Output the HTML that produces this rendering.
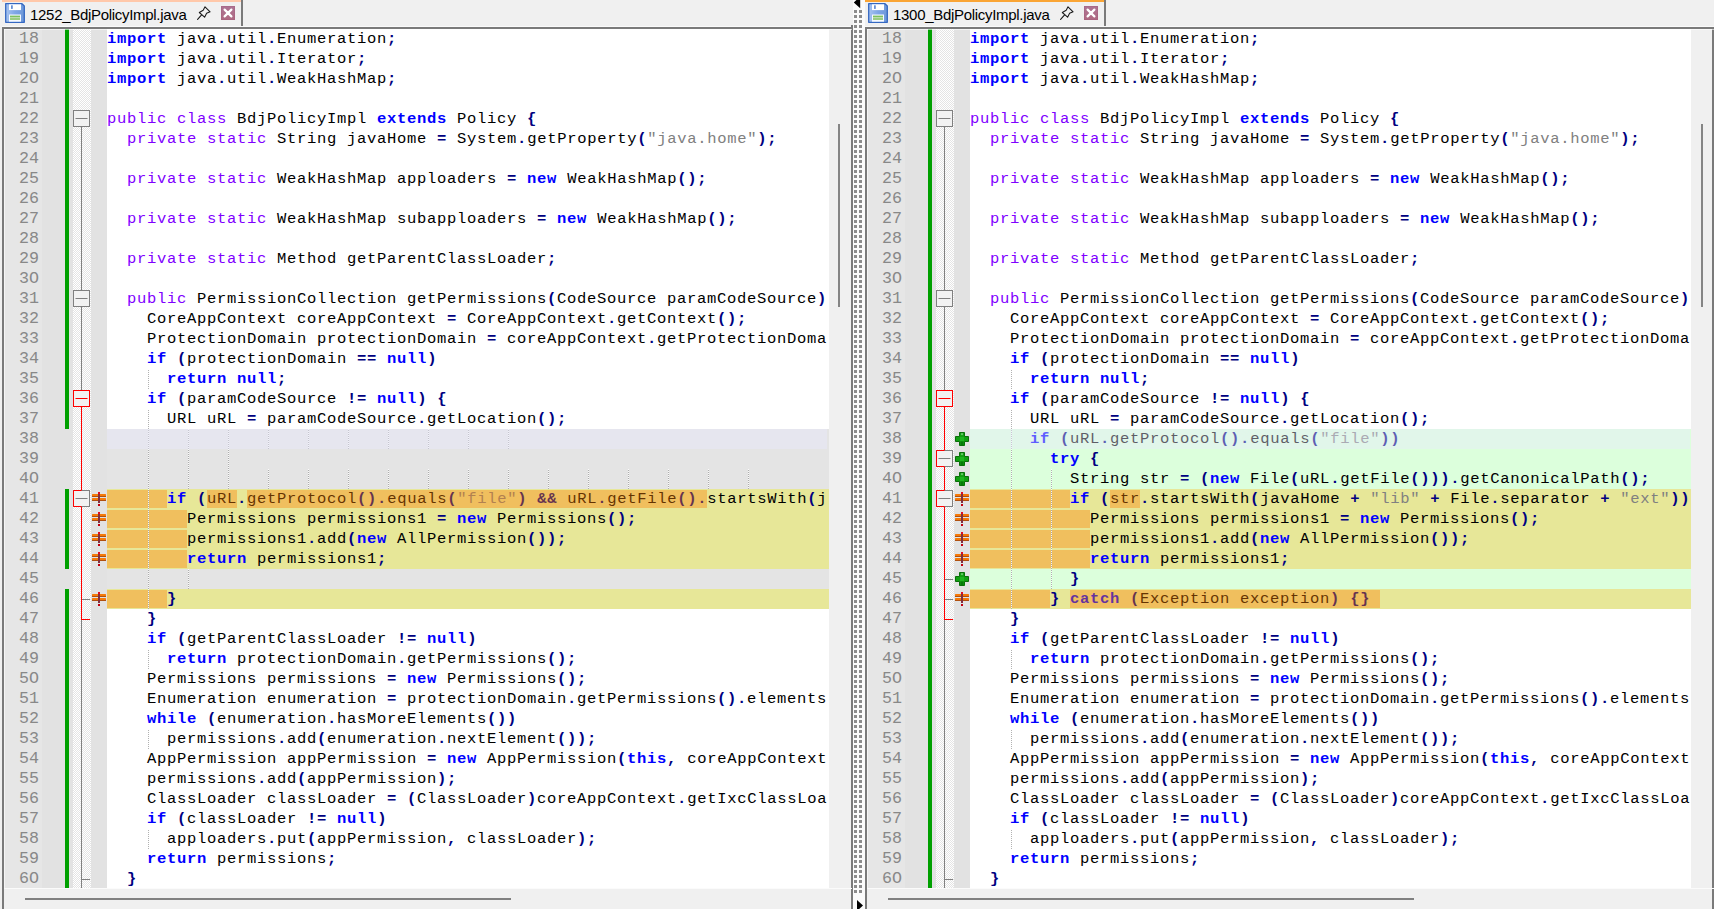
<!DOCTYPE html><html><head><meta charset="utf-8"><style>
*{margin:0;padding:0}
body{width:1714px;height:909px;overflow:hidden;background:#f0f0f0;position:relative;font-family:"Liberation Sans",sans-serif}
div,svg{position:absolute}
.tab{top:0;width:241px;height:26px;background:#f0f0f0}
.stripe{left:0;top:0;width:241px;height:2px}
.tabr{left:239px;top:0;width:2px;height:26px;background:#7a7a7a}
.tabtxt{top:5.5px;font-size:15px;letter-spacing:-0.3px;color:#000;white-space:pre;line-height:18px}
.fold{top:29px;width:18px;height:859px;background-color:#fff;background-image:linear-gradient(45deg,#e4e4e4 25%,transparent 25%,transparent 75%,#e4e4e4 75%),linear-gradient(45deg,#e4e4e4 25%,transparent 25%,transparent 75%,#e4e4e4 75%);background-size:2px 2px;background-position:0 0,1px 1px}
.ln{width:35px;height:20px;text-align:right;font-family:"Liberation Mono",monospace;font-size:16.67px;line-height:20px;color:#888888;white-space:pre}
.code{top:29px;width:722px;height:859px;overflow:hidden}
.l{left:0;height:20px;width:2000px;font-family:"Liberation Mono",monospace;font-size:15.5px;letter-spacing:0.6988px;line-height:20px;white-space:pre;color:#000}
.l b,.l i{font-style:normal}
.k{color:#0000ff;font-weight:bold}
.t{color:#8000ff;font-weight:normal}
.o{color:#000080;font-weight:bold}
.s{color:#808080}
.hi{height:18px;background:rgba(255,131,6,0.392)}
.ig{width:1px;height:20px;background:repeating-linear-gradient(#ffffff 0 1px,#a4a4a4 1px 2px);opacity:.85}
.caret{left:0;width:722px;height:20px;background:rgba(232,232,255,0.4)}
</style></head><body>
<div class="tab" style="left:2px"><div class="stripe" style="background:#ffc8aa"></div><div class="tabr"></div><svg style="position:absolute;left:3px;top:3px" width="20" height="20" viewBox="0 0 20 20"><defs><linearGradient id="fg" x1="0" y1="0" x2="1" y2="0"><stop offset="0" stop-color="#a8c4f0"/><stop offset="0.5" stop-color="#7ea6e6"/><stop offset="1" stop-color="#6e98d8"/></linearGradient></defs><path d="M0.7 0.7H17L19.3 3V19.3H0.7Z" fill="url(#fg)" stroke="#3568c2" stroke-width="1.3" stroke-linejoin="round"/><rect x="4" y="1.3" width="12" height="5.8" fill="#fff"/><rect x="6" y="2.3" width="1.8" height="3.6" fill="#6890d4"/><rect x="4" y="11.5" width="12" height="7.2" fill="#f6faff"/><rect x="5" y="12.6" width="10" height="1.4" fill="#7cc060"/><rect x="5" y="14" width="10" height="1" fill="#bcdcae"/><rect x="5" y="15" width="10" height="2" fill="#9ccd84"/></svg><div class="tabtxt" style="left:28px">1252_BdjPolicyImpl.java</div><svg style="position:absolute;left:195px;top:6px" width="14" height="14" viewBox="0 0 14 14"><path d="M8 0.8L13.1 5.8L9.6 7.3L7.6 11.2L2.3 6.5L6.2 4.2Z" fill="none" stroke="#1a1a1a" stroke-width="1.05" stroke-linejoin="round"/><path d="M4.4 9.2L0.6 13.4" stroke="#1a1a1a" stroke-width="1.1" stroke-linecap="round"/></svg><svg style="position:absolute;left:219px;top:6px" width="14" height="14" viewBox="0 0 14 14"><defs><linearGradient id="cg" x1="0" y1="0" x2="0" y2="1"><stop offset="0" stop-color="#ad7494"/><stop offset="1" stop-color="#b06a82"/></linearGradient></defs><rect x="0" y="0" width="14" height="14" fill="url(#cg)"/><rect x="0.5" y="0.5" width="13" height="13" fill="none" stroke="#a05a7c" stroke-width="1" opacity="0.35"/><path d="M3.6 3.6L10.4 10.4M10.4 3.6L3.6 10.4" stroke="#fff" stroke-width="2.2" stroke-linecap="round"/></svg></div>
<div style="position:absolute;left:2px;top:27px;width:850px;height:2px;background:#7a7a7a"></div>
<div style="position:absolute;left:2px;top:26px;width:850px;height:1px;background:#fafafa"></div>
<div style="position:absolute;left:2px;top:27px;width:2px;height:882px;background:#7a7a7a"></div>
<div style="position:absolute;left:4px;top:29px;width:848px;height:1px;background:rgba(255,255,255,0.6);z-index:5"></div>
<div style="position:absolute;left:4px;top:29px;width:1px;height:859px;background:rgba(255,255,255,0.6);z-index:5"></div>
<div style="position:absolute;left:4px;top:29px;width:38px;height:859px;background:#e6e6e6"></div>
<div style="position:absolute;left:42px;top:29px;width:65px;height:859px;background:#e2e2e2"></div>
<div class="fold" style="left:73px"></div>
<div style="position:absolute;left:107px;top:29px;width:722px;height:859px;background:#fff"></div>
<div style="position:absolute;left:829px;top:29px;width:22px;height:859px;background:#f0f0f0"></div>
<div style="position:absolute;left:838px;top:124px;width:2px;height:183px;background:#858585"></div>
<div style="position:absolute;left:4px;top:888px;width:848px;height:21px;background:#f0f0f0"></div>
<div style="position:absolute;left:4px;top:888px;width:848px;height:1px;background:#fbfbfb;z-index:6"></div>
<div style="position:absolute;left:25px;top:898px;width:486px;height:2px;background:#808080"></div>
<div style="position:absolute;left:851px;top:25px;width:2px;height:884px;background:#7a7a7a"></div>
<div class="ln" style="left:4px;top:29px">18</div>
<div class="ln" style="left:4px;top:49px">19</div>
<div class="ln" style="left:4px;top:69px">2O</div>
<div class="ln" style="left:4px;top:89px">21</div>
<div class="ln" style="left:4px;top:109px">22</div>
<div class="ln" style="left:4px;top:129px">23</div>
<div class="ln" style="left:4px;top:149px">24</div>
<div class="ln" style="left:4px;top:169px">25</div>
<div class="ln" style="left:4px;top:189px">26</div>
<div class="ln" style="left:4px;top:209px">27</div>
<div class="ln" style="left:4px;top:229px">28</div>
<div class="ln" style="left:4px;top:249px">29</div>
<div class="ln" style="left:4px;top:269px">3O</div>
<div class="ln" style="left:4px;top:289px">31</div>
<div class="ln" style="left:4px;top:309px">32</div>
<div class="ln" style="left:4px;top:329px">33</div>
<div class="ln" style="left:4px;top:349px">34</div>
<div class="ln" style="left:4px;top:369px">35</div>
<div class="ln" style="left:4px;top:389px">36</div>
<div class="ln" style="left:4px;top:409px">37</div>
<div class="ln" style="left:4px;top:429px">38</div>
<div class="ln" style="left:4px;top:449px">39</div>
<div class="ln" style="left:4px;top:469px">4O</div>
<div class="ln" style="left:4px;top:489px">41</div>
<div class="ln" style="left:4px;top:509px">42</div>
<div class="ln" style="left:4px;top:529px">43</div>
<div class="ln" style="left:4px;top:549px">44</div>
<div class="ln" style="left:4px;top:569px">45</div>
<div class="ln" style="left:4px;top:589px">46</div>
<div class="ln" style="left:4px;top:609px">47</div>
<div class="ln" style="left:4px;top:629px">48</div>
<div class="ln" style="left:4px;top:649px">49</div>
<div class="ln" style="left:4px;top:669px">5O</div>
<div class="ln" style="left:4px;top:689px">51</div>
<div class="ln" style="left:4px;top:709px">52</div>
<div class="ln" style="left:4px;top:729px">53</div>
<div class="ln" style="left:4px;top:749px">54</div>
<div class="ln" style="left:4px;top:769px">55</div>
<div class="ln" style="left:4px;top:789px">56</div>
<div class="ln" style="left:4px;top:809px">57</div>
<div class="ln" style="left:4px;top:829px">58</div>
<div class="ln" style="left:4px;top:849px">59</div>
<div class="ln" style="left:4px;top:869px">6O</div>
<div style="position:absolute;left:107px;top:429px;width:722px;height:20px;background:#e4e4e4"></div>
<div style="position:absolute;left:107px;top:449px;width:722px;height:20px;background:#e4e4e4"></div>
<div style="position:absolute;left:107px;top:469px;width:722px;height:20px;background:#e4e4e4"></div>
<div style="position:absolute;left:107px;top:569px;width:722px;height:20px;background:#e4e4e4"></div>
<div style="position:absolute;left:107px;top:489px;width:722px;height:20px;background:#e7e798"></div>
<div style="position:absolute;left:107px;top:509px;width:722px;height:20px;background:#e7e798"></div>
<div style="position:absolute;left:107px;top:529px;width:722px;height:20px;background:#e7e798"></div>
<div style="position:absolute;left:107px;top:549px;width:722px;height:20px;background:#e7e798"></div>
<div style="position:absolute;left:107px;top:589px;width:722px;height:20px;background:#e7e798"></div>
<div style="position:absolute;left:65px;top:29px;width:4px;height:400px;background:#00a000"></div>
<div style="position:absolute;left:65px;top:489px;width:4px;height:80px;background:#00a000"></div>
<div style="position:absolute;left:65px;top:589px;width:4px;height:299px;background:#00a000"></div>
<div style="position:absolute;left:81px;top:127px;width:1px;height:263px;background:#808080"></div>
<div style="position:absolute;left:81px;top:619px;width:1px;height:269px;background:#808080"></div>
<div style="position:absolute;left:81px;top:407px;width:1px;height:213px;background:#ff0000"></div>
<svg style="position:absolute;left:73px;top:110px" width="17" height="17" viewBox="0 0 17 17"><rect x="0.5" y="0.5" width="16" height="16" fill="#f2f2f2" stroke="#808080"/><path d="M2.5 8.5H14.5" stroke="#808080"/></svg>
<svg style="position:absolute;left:73px;top:290px" width="17" height="17" viewBox="0 0 17 17"><rect x="0.5" y="0.5" width="16" height="16" fill="#f2f2f2" stroke="#808080"/><path d="M2.5 8.5H14.5" stroke="#808080"/></svg>
<svg style="position:absolute;left:73px;top:390px" width="17" height="17" viewBox="0 0 17 17"><rect x="0.5" y="0.5" width="16" height="16" fill="#f2f2f2" stroke="#ff0000"/><path d="M2.5 8.5H14.5" stroke="#ff0000"/></svg>
<svg style="position:absolute;left:73px;top:490px" width="17" height="17" viewBox="0 0 17 17"><rect x="0.5" y="0.5" width="16" height="16" fill="#f2f2f2" stroke="#808080"/><path d="M8.5 0.5H0.5V16.5H8.5" fill="none" stroke="#ff0000"/><path d="M2.5 8.5H14.5" stroke="#808080"/></svg>
<div style="position:absolute;left:82px;top:599px;width:8px;height:1px;background:#808080"></div>
<div style="position:absolute;left:82px;top:619px;width:8px;height:1px;background:#ff0000"></div>
<div style="position:absolute;left:82px;top:879px;width:8px;height:1px;background:#808080"></div>
<svg style="position:absolute;left:92px;top:489px" width="15" height="20" viewBox="0 0 15 20"><rect x="0" y="5" width="14" height="3" rx="0.5" fill="#f57a0a"/><rect x="0" y="9" width="14" height="3" rx="0.5" fill="#f57a0a"/><rect x="0" y="7" width="14" height="1" fill="#b05010"/><rect x="0" y="11" width="14" height="1" fill="#b05010"/><rect x="6" y="3" width="2" height="11" fill="#803040"/><rect x="6" y="3" width="2" height="2" fill="#e01020"/><rect x="6" y="15" width="2" height="2" fill="#c00010"/></svg>
<svg style="position:absolute;left:92px;top:509px" width="15" height="20" viewBox="0 0 15 20"><rect x="0" y="5" width="14" height="3" rx="0.5" fill="#f57a0a"/><rect x="0" y="9" width="14" height="3" rx="0.5" fill="#f57a0a"/><rect x="0" y="7" width="14" height="1" fill="#b05010"/><rect x="0" y="11" width="14" height="1" fill="#b05010"/><rect x="6" y="3" width="2" height="11" fill="#803040"/><rect x="6" y="3" width="2" height="2" fill="#e01020"/><rect x="6" y="15" width="2" height="2" fill="#c00010"/></svg>
<svg style="position:absolute;left:92px;top:529px" width="15" height="20" viewBox="0 0 15 20"><rect x="0" y="5" width="14" height="3" rx="0.5" fill="#f57a0a"/><rect x="0" y="9" width="14" height="3" rx="0.5" fill="#f57a0a"/><rect x="0" y="7" width="14" height="1" fill="#b05010"/><rect x="0" y="11" width="14" height="1" fill="#b05010"/><rect x="6" y="3" width="2" height="11" fill="#803040"/><rect x="6" y="3" width="2" height="2" fill="#e01020"/><rect x="6" y="15" width="2" height="2" fill="#c00010"/></svg>
<svg style="position:absolute;left:92px;top:549px" width="15" height="20" viewBox="0 0 15 20"><rect x="0" y="5" width="14" height="3" rx="0.5" fill="#f57a0a"/><rect x="0" y="9" width="14" height="3" rx="0.5" fill="#f57a0a"/><rect x="0" y="7" width="14" height="1" fill="#b05010"/><rect x="0" y="11" width="14" height="1" fill="#b05010"/><rect x="6" y="3" width="2" height="11" fill="#803040"/><rect x="6" y="3" width="2" height="2" fill="#e01020"/><rect x="6" y="15" width="2" height="2" fill="#c00010"/></svg>
<svg style="position:absolute;left:92px;top:589px" width="15" height="20" viewBox="0 0 15 20"><rect x="0" y="5" width="14" height="3" rx="0.5" fill="#f57a0a"/><rect x="0" y="9" width="14" height="3" rx="0.5" fill="#f57a0a"/><rect x="0" y="7" width="14" height="1" fill="#b05010"/><rect x="0" y="11" width="14" height="1" fill="#b05010"/><rect x="6" y="3" width="2" height="11" fill="#803040"/><rect x="6" y="3" width="2" height="2" fill="#e01020"/><rect x="6" y="15" width="2" height="2" fill="#c00010"/></svg>
<div class="code" style="left:107px;width:720px">
<div class="l" style="top:0px"><b class="k">import</b> java<b class="o">.</b>util<b class="o">.</b>Enumeration<b class="o">;</b></div>
<div class="l" style="top:20px"><b class="k">import</b> java<b class="o">.</b>util<b class="o">.</b>Iterator<b class="o">;</b></div>
<div class="l" style="top:40px"><b class="k">import</b> java<b class="o">.</b>util<b class="o">.</b>WeakHashMap<b class="o">;</b></div>
<div class="l" style="top:60px"></div>
<div class="l" style="top:80px"><i class="t">public</i> <i class="t">class</i> BdjPolicyImpl <b class="k">extends</b> Policy <b class="o">{</b></div>
<div class="l" style="top:100px">  <i class="t">private</i> <i class="t">static</i> String javaHome <b class="o">=</b> System<b class="o">.</b>getProperty<b class="o">(</b><i class="s">&quot;java.home&quot;</i><b class="o">);</b></div>
<div class="l" style="top:120px"></div>
<div class="l" style="top:140px">  <i class="t">private</i> <i class="t">static</i> WeakHashMap apploaders <b class="o">=</b> <b class="k">new</b> WeakHashMap<b class="o">();</b></div>
<div class="l" style="top:160px"></div>
<div class="l" style="top:180px">  <i class="t">private</i> <i class="t">static</i> WeakHashMap subapploaders <b class="o">=</b> <b class="k">new</b> WeakHashMap<b class="o">();</b></div>
<div class="l" style="top:200px"></div>
<div class="l" style="top:220px">  <i class="t">private</i> <i class="t">static</i> Method getParentClassLoader<b class="o">;</b></div>
<div class="l" style="top:240px"></div>
<div class="l" style="top:260px">  <i class="t">public</i> PermissionCollection getPermissions<b class="o">(</b>CodeSource paramCodeSource<b class="o">)</b> <b class="o">{</b></div>
<div class="l" style="top:280px">    CoreAppContext coreAppContext <b class="o">=</b> CoreAppContext<b class="o">.</b>getContext<b class="o">();</b></div>
<div class="l" style="top:300px">    ProtectionDomain protectionDomain <b class="o">=</b> coreAppContext<b class="o">.</b>getProtectionDomain<b class="o">();</b></div>
<div class="l" style="top:320px">    <b class="k">if</b> <b class="o">(</b>protectionDomain <b class="o">==</b> <b class="k">null</b><b class="o">)</b></div>
<div class="l" style="top:340px">      <b class="k">return</b> <b class="k">null</b><b class="o">;</b></div>
<div class="l" style="top:360px">    <b class="k">if</b> <b class="o">(</b>paramCodeSource <b class="o">!=</b> <b class="k">null</b><b class="o">)</b> <b class="o">{</b></div>
<div class="l" style="top:380px">      URL uRL <b class="o">=</b> paramCodeSource<b class="o">.</b>getLocation<b class="o">();</b></div>
<div class="l" style="top:400px"></div>
<div class="l" style="top:420px"></div>
<div class="l" style="top:440px"></div>
<div class="l" style="top:460px">      <b class="k">if</b> <b class="o">(</b>uRL<b class="o">.</b>getProtocol<b class="o">().</b>equals<b class="o">(</b><i class="s">&quot;file&quot;</i><b class="o">)</b> <b class="o">&amp;&amp;</b> uRL<b class="o">.</b>getFile<b class="o">().</b>startsWith<b class="o">(</b>javaHome<b class="o">))</b> <b class="o">{</b></div>
<div class="l" style="top:480px">        Permissions permissions1 <b class="o">=</b> <b class="k">new</b> Permissions<b class="o">();</b></div>
<div class="l" style="top:500px">        permissions1<b class="o">.</b>add<b class="o">(</b><b class="k">new</b> AllPermission<b class="o">());</b></div>
<div class="l" style="top:520px">        <b class="k">return</b> permissions1<b class="o">;</b></div>
<div class="l" style="top:540px"></div>
<div class="l" style="top:560px">      <b class="o">}</b></div>
<div class="l" style="top:580px">    <b class="o">}</b></div>
<div class="l" style="top:600px">    <b class="k">if</b> <b class="o">(</b>getParentClassLoader <b class="o">!=</b> <b class="k">null</b><b class="o">)</b></div>
<div class="l" style="top:620px">      <b class="k">return</b> protectionDomain<b class="o">.</b>getPermissions<b class="o">();</b></div>
<div class="l" style="top:640px">    Permissions permissions <b class="o">=</b> <b class="k">new</b> Permissions<b class="o">();</b></div>
<div class="l" style="top:660px">    Enumeration enumeration <b class="o">=</b> protectionDomain<b class="o">.</b>getPermissions<b class="o">().</b>elements<b class="o">();</b></div>
<div class="l" style="top:680px">    <b class="k">while</b> <b class="o">(</b>enumeration<b class="o">.</b>hasMoreElements<b class="o">())</b></div>
<div class="l" style="top:700px">      permissions<b class="o">.</b>add<b class="o">(</b>enumeration<b class="o">.</b>nextElement<b class="o">());</b></div>
<div class="l" style="top:720px">    AppPermission appPermission <b class="o">=</b> <b class="k">new</b> AppPermission<b class="o">(</b><b class="k">this</b><b class="o">,</b> coreAppContext<b class="o">);</b></div>
<div class="l" style="top:740px">    permissions<b class="o">.</b>add<b class="o">(</b>appPermission<b class="o">);</b></div>
<div class="l" style="top:760px">    ClassLoader classLoader <b class="o">=</b> <b class="o">(</b>ClassLoader<b class="o">)</b>coreAppContext<b class="o">.</b>getIxcClassLoader<b class="o">();</b></div>
<div class="l" style="top:780px">    <b class="k">if</b> <b class="o">(</b>classLoader <b class="o">!=</b> <b class="k">null</b><b class="o">)</b></div>
<div class="l" style="top:800px">      apploaders<b class="o">.</b>put<b class="o">(</b>appPermission<b class="o">,</b> classLoader<b class="o">);</b></div>
<div class="l" style="top:820px">    <b class="k">return</b> permissions<b class="o">;</b></div>
<div class="l" style="top:840px">  <b class="o">}</b></div>
<div class="hi" style="left:0px;top:461px;width:60px"></div>
<div class="hi" style="left:100px;top:461px;width:30px"></div>
<div class="hi" style="left:140px;top:461px;width:460px"></div>
<div class="hi" style="left:0px;top:481px;width:80px"></div>
<div class="hi" style="left:0px;top:501px;width:80px"></div>
<div class="hi" style="left:0px;top:521px;width:80px"></div>
<div class="hi" style="left:0px;top:561px;width:60px"></div>
<div class="ig" style="left:41px;top:340px"></div>
<div class="ig" style="left:41px;top:380px"></div>
<div class="ig" style="left:41px;top:400px"></div>
<div class="ig" style="left:81px;top:400px"></div>
<div class="ig" style="left:121px;top:400px"></div>
<div class="ig" style="left:161px;top:400px"></div>
<div class="ig" style="left:201px;top:400px"></div>
<div class="ig" style="left:241px;top:400px"></div>
<div class="ig" style="left:281px;top:400px"></div>
<div class="ig" style="left:321px;top:400px"></div>
<div class="ig" style="left:361px;top:400px"></div>
<div class="ig" style="left:401px;top:400px"></div>
<div class="ig" style="left:41px;top:420px"></div>
<div class="ig" style="left:81px;top:420px"></div>
<div class="ig" style="left:121px;top:420px"></div>
<div class="ig" style="left:41px;top:440px"></div>
<div class="ig" style="left:81px;top:440px"></div>
<div class="ig" style="left:121px;top:440px"></div>
<div class="ig" style="left:161px;top:440px"></div>
<div class="ig" style="left:201px;top:440px"></div>
<div class="ig" style="left:241px;top:440px"></div>
<div class="ig" style="left:281px;top:440px"></div>
<div class="ig" style="left:321px;top:440px"></div>
<div class="ig" style="left:361px;top:440px"></div>
<div class="ig" style="left:401px;top:440px"></div>
<div class="ig" style="left:441px;top:440px"></div>
<div class="ig" style="left:481px;top:440px"></div>
<div class="ig" style="left:521px;top:440px"></div>
<div class="ig" style="left:561px;top:440px"></div>
<div class="ig" style="left:601px;top:440px"></div>
<div class="ig" style="left:641px;top:440px"></div>
<div class="ig" style="left:41px;top:460px"></div>
<div class="ig" style="left:41px;top:480px"></div>
<div class="ig" style="left:41px;top:500px"></div>
<div class="ig" style="left:41px;top:520px"></div>
<div class="ig" style="left:41px;top:540px"></div>
<div class="ig" style="left:81px;top:540px"></div>
<div class="ig" style="left:41px;top:560px"></div>
<div class="ig" style="left:41px;top:620px"></div>
<div class="ig" style="left:41px;top:700px"></div>
<div class="ig" style="left:41px;top:800px"></div>
<div class="caret" style="top:400px;width:722px"></div>
</div>
<div style="position:absolute;left:853px;top:0;width:12px;height:909px;background:#fbfbfb"></div>
<div style="position:absolute;left:865px;top:27px;width:2px;height:882px;background:#7a7a7a"></div>
<svg style="position:absolute;left:853px;top:0" width="12" height="909"><defs><pattern id="sq" x="0" y="0" width="5" height="5" patternUnits="userSpaceOnUse"><rect x="1" y="0" width="3" height="3" fill="#8c8c8c"/></pattern></defs><rect x="0" y="10" width="10" height="883" fill="url(#sq)"/><path d="M7.2 -3.5V8.2L0.8 2.5Z" fill="#000"/><path d="M4 900L10 905.5L4 911Z" fill="#000"/></svg>
<div class="tab" style="left:865px"><div class="stripe" style="background:#faa535"></div><div class="tabr"></div><svg style="position:absolute;left:3px;top:3px" width="20" height="20" viewBox="0 0 20 20"><defs><linearGradient id="fg" x1="0" y1="0" x2="1" y2="0"><stop offset="0" stop-color="#a8c4f0"/><stop offset="0.5" stop-color="#7ea6e6"/><stop offset="1" stop-color="#6e98d8"/></linearGradient></defs><path d="M0.7 0.7H17L19.3 3V19.3H0.7Z" fill="url(#fg)" stroke="#3568c2" stroke-width="1.3" stroke-linejoin="round"/><rect x="4" y="1.3" width="12" height="5.8" fill="#fff"/><rect x="6" y="2.3" width="1.8" height="3.6" fill="#6890d4"/><rect x="4" y="11.5" width="12" height="7.2" fill="#f6faff"/><rect x="5" y="12.6" width="10" height="1.4" fill="#7cc060"/><rect x="5" y="14" width="10" height="1" fill="#bcdcae"/><rect x="5" y="15" width="10" height="2" fill="#9ccd84"/></svg><div class="tabtxt" style="left:28px">1300_BdjPolicyImpl.java</div><svg style="position:absolute;left:195px;top:6px" width="14" height="14" viewBox="0 0 14 14"><path d="M8 0.8L13.1 5.8L9.6 7.3L7.6 11.2L2.3 6.5L6.2 4.2Z" fill="none" stroke="#1a1a1a" stroke-width="1.05" stroke-linejoin="round"/><path d="M4.4 9.2L0.6 13.4" stroke="#1a1a1a" stroke-width="1.1" stroke-linecap="round"/></svg><svg style="position:absolute;left:219px;top:6px" width="14" height="14" viewBox="0 0 14 14"><defs><linearGradient id="cg" x1="0" y1="0" x2="0" y2="1"><stop offset="0" stop-color="#ad7494"/><stop offset="1" stop-color="#b06a82"/></linearGradient></defs><rect x="0" y="0" width="14" height="14" fill="url(#cg)"/><rect x="0.5" y="0.5" width="13" height="13" fill="none" stroke="#a05a7c" stroke-width="1" opacity="0.35"/><path d="M3.6 3.6L10.4 10.4M10.4 3.6L3.6 10.4" stroke="#fff" stroke-width="2.2" stroke-linecap="round"/></svg></div>
<div style="position:absolute;left:865px;top:27px;width:849px;height:2px;background:#7a7a7a"></div>
<div style="position:absolute;left:865px;top:26px;width:849px;height:1px;background:#fafafa"></div>
<div style="position:absolute;left:865px;top:27px;width:2px;height:882px;background:#7a7a7a"></div>
<div style="position:absolute;left:867px;top:29px;width:847px;height:1px;background:rgba(255,255,255,0.6);z-index:5"></div>
<div style="position:absolute;left:867px;top:29px;width:1px;height:859px;background:rgba(255,255,255,0.6);z-index:5"></div>
<div style="position:absolute;left:867px;top:29px;width:38px;height:859px;background:#e6e6e6"></div>
<div style="position:absolute;left:905px;top:29px;width:65px;height:859px;background:#e2e2e2"></div>
<div class="fold" style="left:936px"></div>
<div style="position:absolute;left:970px;top:29px;width:721px;height:859px;background:#fff"></div>
<div style="position:absolute;left:1691px;top:29px;width:23px;height:859px;background:#f0f0f0"></div>
<div style="position:absolute;left:1701px;top:124px;width:2px;height:183px;background:#858585"></div>
<div style="position:absolute;left:867px;top:888px;width:847px;height:21px;background:#f0f0f0"></div>
<div style="position:absolute;left:867px;top:888px;width:847px;height:1px;background:#fbfbfb;z-index:6"></div>
<div style="position:absolute;left:888px;top:898px;width:526px;height:2px;background:#808080"></div>
<div style="position:absolute;left:1712px;top:27px;width:2px;height:882px;background:#7a7a7a"></div>
<div class="ln" style="left:867px;top:29px">18</div>
<div class="ln" style="left:867px;top:49px">19</div>
<div class="ln" style="left:867px;top:69px">2O</div>
<div class="ln" style="left:867px;top:89px">21</div>
<div class="ln" style="left:867px;top:109px">22</div>
<div class="ln" style="left:867px;top:129px">23</div>
<div class="ln" style="left:867px;top:149px">24</div>
<div class="ln" style="left:867px;top:169px">25</div>
<div class="ln" style="left:867px;top:189px">26</div>
<div class="ln" style="left:867px;top:209px">27</div>
<div class="ln" style="left:867px;top:229px">28</div>
<div class="ln" style="left:867px;top:249px">29</div>
<div class="ln" style="left:867px;top:269px">3O</div>
<div class="ln" style="left:867px;top:289px">31</div>
<div class="ln" style="left:867px;top:309px">32</div>
<div class="ln" style="left:867px;top:329px">33</div>
<div class="ln" style="left:867px;top:349px">34</div>
<div class="ln" style="left:867px;top:369px">35</div>
<div class="ln" style="left:867px;top:389px">36</div>
<div class="ln" style="left:867px;top:409px">37</div>
<div class="ln" style="left:867px;top:429px">38</div>
<div class="ln" style="left:867px;top:449px">39</div>
<div class="ln" style="left:867px;top:469px">4O</div>
<div class="ln" style="left:867px;top:489px">41</div>
<div class="ln" style="left:867px;top:509px">42</div>
<div class="ln" style="left:867px;top:529px">43</div>
<div class="ln" style="left:867px;top:549px">44</div>
<div class="ln" style="left:867px;top:569px">45</div>
<div class="ln" style="left:867px;top:589px">46</div>
<div class="ln" style="left:867px;top:609px">47</div>
<div class="ln" style="left:867px;top:629px">48</div>
<div class="ln" style="left:867px;top:649px">49</div>
<div class="ln" style="left:867px;top:669px">5O</div>
<div class="ln" style="left:867px;top:689px">51</div>
<div class="ln" style="left:867px;top:709px">52</div>
<div class="ln" style="left:867px;top:729px">53</div>
<div class="ln" style="left:867px;top:749px">54</div>
<div class="ln" style="left:867px;top:769px">55</div>
<div class="ln" style="left:867px;top:789px">56</div>
<div class="ln" style="left:867px;top:809px">57</div>
<div class="ln" style="left:867px;top:829px">58</div>
<div class="ln" style="left:867px;top:849px">59</div>
<div class="ln" style="left:867px;top:869px">6O</div>
<div style="position:absolute;left:970px;top:429px;width:721px;height:20px;background:#dcffdc"></div>
<div style="position:absolute;left:970px;top:449px;width:721px;height:20px;background:#dcffdc"></div>
<div style="position:absolute;left:970px;top:469px;width:721px;height:20px;background:#dcffdc"></div>
<div style="position:absolute;left:970px;top:569px;width:721px;height:20px;background:#dcffdc"></div>
<div style="position:absolute;left:970px;top:489px;width:721px;height:20px;background:#e7e798"></div>
<div style="position:absolute;left:970px;top:509px;width:721px;height:20px;background:#e7e798"></div>
<div style="position:absolute;left:970px;top:529px;width:721px;height:20px;background:#e7e798"></div>
<div style="position:absolute;left:970px;top:549px;width:721px;height:20px;background:#e7e798"></div>
<div style="position:absolute;left:970px;top:589px;width:721px;height:20px;background:#e7e798"></div>
<div style="position:absolute;left:928px;top:29px;width:4px;height:859px;background:#00a000"></div>
<div style="position:absolute;left:944px;top:127px;width:1px;height:263px;background:#808080"></div>
<div style="position:absolute;left:944px;top:619px;width:1px;height:269px;background:#808080"></div>
<div style="position:absolute;left:944px;top:407px;width:1px;height:213px;background:#ff0000"></div>
<svg style="position:absolute;left:936px;top:110px" width="17" height="17" viewBox="0 0 17 17"><rect x="0.5" y="0.5" width="16" height="16" fill="#f2f2f2" stroke="#808080"/><path d="M2.5 8.5H14.5" stroke="#808080"/></svg>
<svg style="position:absolute;left:936px;top:290px" width="17" height="17" viewBox="0 0 17 17"><rect x="0.5" y="0.5" width="16" height="16" fill="#f2f2f2" stroke="#808080"/><path d="M2.5 8.5H14.5" stroke="#808080"/></svg>
<svg style="position:absolute;left:936px;top:390px" width="17" height="17" viewBox="0 0 17 17"><rect x="0.5" y="0.5" width="16" height="16" fill="#f2f2f2" stroke="#ff0000"/><path d="M2.5 8.5H14.5" stroke="#ff0000"/></svg>
<svg style="position:absolute;left:936px;top:450px" width="17" height="17" viewBox="0 0 17 17"><rect x="0.5" y="0.5" width="16" height="16" fill="#f2f2f2" stroke="#808080"/><path d="M8.5 0.5H0.5V16.5H8.5" fill="none" stroke="#ff0000"/><path d="M2.5 8.5H14.5" stroke="#808080"/></svg>
<svg style="position:absolute;left:936px;top:490px" width="17" height="17" viewBox="0 0 17 17"><rect x="0.5" y="0.5" width="16" height="16" fill="#f2f2f2" stroke="#808080"/><path d="M8.5 0.5H0.5V16.5H8.5" fill="none" stroke="#ff0000"/><path d="M2.5 8.5H14.5" stroke="#808080"/></svg>
<div style="position:absolute;left:945px;top:579px;width:8px;height:1px;background:#808080"></div>
<div style="position:absolute;left:945px;top:599px;width:8px;height:1px;background:#808080"></div>
<div style="position:absolute;left:945px;top:619px;width:8px;height:1px;background:#ff0000"></div>
<div style="position:absolute;left:945px;top:879px;width:8px;height:1px;background:#808080"></div>
<svg style="position:absolute;left:955px;top:489px" width="15" height="20" viewBox="0 0 15 20"><rect x="0" y="5" width="14" height="3" rx="0.5" fill="#f57a0a"/><rect x="0" y="9" width="14" height="3" rx="0.5" fill="#f57a0a"/><rect x="0" y="7" width="14" height="1" fill="#b05010"/><rect x="0" y="11" width="14" height="1" fill="#b05010"/><rect x="6" y="3" width="2" height="11" fill="#803040"/><rect x="6" y="3" width="2" height="2" fill="#e01020"/><rect x="6" y="15" width="2" height="2" fill="#c00010"/></svg>
<svg style="position:absolute;left:955px;top:509px" width="15" height="20" viewBox="0 0 15 20"><rect x="0" y="5" width="14" height="3" rx="0.5" fill="#f57a0a"/><rect x="0" y="9" width="14" height="3" rx="0.5" fill="#f57a0a"/><rect x="0" y="7" width="14" height="1" fill="#b05010"/><rect x="0" y="11" width="14" height="1" fill="#b05010"/><rect x="6" y="3" width="2" height="11" fill="#803040"/><rect x="6" y="3" width="2" height="2" fill="#e01020"/><rect x="6" y="15" width="2" height="2" fill="#c00010"/></svg>
<svg style="position:absolute;left:955px;top:529px" width="15" height="20" viewBox="0 0 15 20"><rect x="0" y="5" width="14" height="3" rx="0.5" fill="#f57a0a"/><rect x="0" y="9" width="14" height="3" rx="0.5" fill="#f57a0a"/><rect x="0" y="7" width="14" height="1" fill="#b05010"/><rect x="0" y="11" width="14" height="1" fill="#b05010"/><rect x="6" y="3" width="2" height="11" fill="#803040"/><rect x="6" y="3" width="2" height="2" fill="#e01020"/><rect x="6" y="15" width="2" height="2" fill="#c00010"/></svg>
<svg style="position:absolute;left:955px;top:549px" width="15" height="20" viewBox="0 0 15 20"><rect x="0" y="5" width="14" height="3" rx="0.5" fill="#f57a0a"/><rect x="0" y="9" width="14" height="3" rx="0.5" fill="#f57a0a"/><rect x="0" y="7" width="14" height="1" fill="#b05010"/><rect x="0" y="11" width="14" height="1" fill="#b05010"/><rect x="6" y="3" width="2" height="11" fill="#803040"/><rect x="6" y="3" width="2" height="2" fill="#e01020"/><rect x="6" y="15" width="2" height="2" fill="#c00010"/></svg>
<svg style="position:absolute;left:955px;top:589px" width="15" height="20" viewBox="0 0 15 20"><rect x="0" y="5" width="14" height="3" rx="0.5" fill="#f57a0a"/><rect x="0" y="9" width="14" height="3" rx="0.5" fill="#f57a0a"/><rect x="0" y="7" width="14" height="1" fill="#b05010"/><rect x="0" y="11" width="14" height="1" fill="#b05010"/><rect x="6" y="3" width="2" height="11" fill="#803040"/><rect x="6" y="3" width="2" height="2" fill="#e01020"/><rect x="6" y="15" width="2" height="2" fill="#c00010"/></svg>
<svg style="position:absolute;left:954px;top:429px" width="16" height="20" viewBox="0 0 16 20"><path d="M5.5 3.5H10.5V7.5H14.5V12.5H10.5V16.5H5.5V12.5H1.5V7.5H5.5Z" fill="#12a012" stroke="#0b6e0b" stroke-width="1"/><path d="M6 8H10V12H6Z" fill="#20b420"/><rect x="6.5" y="12.5" width="3" height="3.5" fill="#08780a"/><circle cx="8" cy="5.2" r="1.1" fill="#6cc46c"/></svg>
<svg style="position:absolute;left:954px;top:449px" width="16" height="20" viewBox="0 0 16 20"><path d="M5.5 3.5H10.5V7.5H14.5V12.5H10.5V16.5H5.5V12.5H1.5V7.5H5.5Z" fill="#12a012" stroke="#0b6e0b" stroke-width="1"/><path d="M6 8H10V12H6Z" fill="#20b420"/><rect x="6.5" y="12.5" width="3" height="3.5" fill="#08780a"/><circle cx="8" cy="5.2" r="1.1" fill="#6cc46c"/></svg>
<svg style="position:absolute;left:954px;top:469px" width="16" height="20" viewBox="0 0 16 20"><path d="M5.5 3.5H10.5V7.5H14.5V12.5H10.5V16.5H5.5V12.5H1.5V7.5H5.5Z" fill="#12a012" stroke="#0b6e0b" stroke-width="1"/><path d="M6 8H10V12H6Z" fill="#20b420"/><rect x="6.5" y="12.5" width="3" height="3.5" fill="#08780a"/><circle cx="8" cy="5.2" r="1.1" fill="#6cc46c"/></svg>
<svg style="position:absolute;left:954px;top:569px" width="16" height="20" viewBox="0 0 16 20"><path d="M5.5 3.5H10.5V7.5H14.5V12.5H10.5V16.5H5.5V12.5H1.5V7.5H5.5Z" fill="#12a012" stroke="#0b6e0b" stroke-width="1"/><path d="M6 8H10V12H6Z" fill="#20b420"/><rect x="6.5" y="12.5" width="3" height="3.5" fill="#08780a"/><circle cx="8" cy="5.2" r="1.1" fill="#6cc46c"/></svg>
<div class="code" style="left:970px;width:720px">
<div class="l" style="top:0px"><b class="k">import</b> java<b class="o">.</b>util<b class="o">.</b>Enumeration<b class="o">;</b></div>
<div class="l" style="top:20px"><b class="k">import</b> java<b class="o">.</b>util<b class="o">.</b>Iterator<b class="o">;</b></div>
<div class="l" style="top:40px"><b class="k">import</b> java<b class="o">.</b>util<b class="o">.</b>WeakHashMap<b class="o">;</b></div>
<div class="l" style="top:60px"></div>
<div class="l" style="top:80px"><i class="t">public</i> <i class="t">class</i> BdjPolicyImpl <b class="k">extends</b> Policy <b class="o">{</b></div>
<div class="l" style="top:100px">  <i class="t">private</i> <i class="t">static</i> String javaHome <b class="o">=</b> System<b class="o">.</b>getProperty<b class="o">(</b><i class="s">&quot;java.home&quot;</i><b class="o">);</b></div>
<div class="l" style="top:120px"></div>
<div class="l" style="top:140px">  <i class="t">private</i> <i class="t">static</i> WeakHashMap apploaders <b class="o">=</b> <b class="k">new</b> WeakHashMap<b class="o">();</b></div>
<div class="l" style="top:160px"></div>
<div class="l" style="top:180px">  <i class="t">private</i> <i class="t">static</i> WeakHashMap subapploaders <b class="o">=</b> <b class="k">new</b> WeakHashMap<b class="o">();</b></div>
<div class="l" style="top:200px"></div>
<div class="l" style="top:220px">  <i class="t">private</i> <i class="t">static</i> Method getParentClassLoader<b class="o">;</b></div>
<div class="l" style="top:240px"></div>
<div class="l" style="top:260px">  <i class="t">public</i> PermissionCollection getPermissions<b class="o">(</b>CodeSource paramCodeSource<b class="o">)</b> <b class="o">{</b></div>
<div class="l" style="top:280px">    CoreAppContext coreAppContext <b class="o">=</b> CoreAppContext<b class="o">.</b>getContext<b class="o">();</b></div>
<div class="l" style="top:300px">    ProtectionDomain protectionDomain <b class="o">=</b> coreAppContext<b class="o">.</b>getProtectionDomain<b class="o">();</b></div>
<div class="l" style="top:320px">    <b class="k">if</b> <b class="o">(</b>protectionDomain <b class="o">==</b> <b class="k">null</b><b class="o">)</b></div>
<div class="l" style="top:340px">      <b class="k">return</b> <b class="k">null</b><b class="o">;</b></div>
<div class="l" style="top:360px">    <b class="k">if</b> <b class="o">(</b>paramCodeSource <b class="o">!=</b> <b class="k">null</b><b class="o">)</b> <b class="o">{</b></div>
<div class="l" style="top:380px">      URL uRL <b class="o">=</b> paramCodeSource<b class="o">.</b>getLocation<b class="o">();</b></div>
<div class="l" style="top:400px">      <b class="k">if</b> <b class="o">(</b>uRL<b class="o">.</b>getProtocol<b class="o">().</b>equals<b class="o">(</b><i class="s">&quot;file&quot;</i><b class="o">))</b></div>
<div class="l" style="top:420px">        <b class="k">try</b> <b class="o">{</b></div>
<div class="l" style="top:440px">          String str <b class="o">=</b> <b class="o">(</b><b class="k">new</b> File<b class="o">(</b>uRL<b class="o">.</b>getFile<b class="o">())).</b>getCanonicalPath<b class="o">();</b></div>
<div class="l" style="top:460px">          <b class="k">if</b> <b class="o">(</b>str<b class="o">.</b>startsWith<b class="o">(</b>javaHome <b class="o">+</b> <i class="s">&quot;lib&quot;</i> <b class="o">+</b> File<b class="o">.</b>separator <b class="o">+</b> <i class="s">&quot;ext&quot;</i><b class="o">))</b> <b class="o">{</b></div>
<div class="l" style="top:480px">            Permissions permissions1 <b class="o">=</b> <b class="k">new</b> Permissions<b class="o">();</b></div>
<div class="l" style="top:500px">            permissions1<b class="o">.</b>add<b class="o">(</b><b class="k">new</b> AllPermission<b class="o">());</b></div>
<div class="l" style="top:520px">            <b class="k">return</b> permissions1<b class="o">;</b></div>
<div class="l" style="top:540px">          <b class="o">}</b></div>
<div class="l" style="top:560px">        <b class="o">}</b> <b class="k">catch</b> <b class="o">(</b>Exception exception<b class="o">)</b> <b class="o">{}</b></div>
<div class="l" style="top:580px">    <b class="o">}</b></div>
<div class="l" style="top:600px">    <b class="k">if</b> <b class="o">(</b>getParentClassLoader <b class="o">!=</b> <b class="k">null</b><b class="o">)</b></div>
<div class="l" style="top:620px">      <b class="k">return</b> protectionDomain<b class="o">.</b>getPermissions<b class="o">();</b></div>
<div class="l" style="top:640px">    Permissions permissions <b class="o">=</b> <b class="k">new</b> Permissions<b class="o">();</b></div>
<div class="l" style="top:660px">    Enumeration enumeration <b class="o">=</b> protectionDomain<b class="o">.</b>getPermissions<b class="o">().</b>elements<b class="o">();</b></div>
<div class="l" style="top:680px">    <b class="k">while</b> <b class="o">(</b>enumeration<b class="o">.</b>hasMoreElements<b class="o">())</b></div>
<div class="l" style="top:700px">      permissions<b class="o">.</b>add<b class="o">(</b>enumeration<b class="o">.</b>nextElement<b class="o">());</b></div>
<div class="l" style="top:720px">    AppPermission appPermission <b class="o">=</b> <b class="k">new</b> AppPermission<b class="o">(</b><b class="k">this</b><b class="o">,</b> coreAppContext<b class="o">);</b></div>
<div class="l" style="top:740px">    permissions<b class="o">.</b>add<b class="o">(</b>appPermission<b class="o">);</b></div>
<div class="l" style="top:760px">    ClassLoader classLoader <b class="o">=</b> <b class="o">(</b>ClassLoader<b class="o">)</b>coreAppContext<b class="o">.</b>getIxcClassLoader<b class="o">();</b></div>
<div class="l" style="top:780px">    <b class="k">if</b> <b class="o">(</b>classLoader <b class="o">!=</b> <b class="k">null</b><b class="o">)</b></div>
<div class="l" style="top:800px">      apploaders<b class="o">.</b>put<b class="o">(</b>appPermission<b class="o">,</b> classLoader<b class="o">);</b></div>
<div class="l" style="top:820px">    <b class="k">return</b> permissions<b class="o">;</b></div>
<div class="l" style="top:840px">  <b class="o">}</b></div>
<div class="hi" style="left:0px;top:461px;width:100px"></div>
<div class="hi" style="left:140px;top:461px;width:30px"></div>
<div class="hi" style="left:0px;top:481px;width:120px"></div>
<div class="hi" style="left:0px;top:501px;width:120px"></div>
<div class="hi" style="left:0px;top:521px;width:120px"></div>
<div class="hi" style="left:0px;top:561px;width:80px"></div>
<div class="hi" style="left:100px;top:561px;width:310px"></div>
<div class="ig" style="left:41px;top:340px"></div>
<div class="ig" style="left:41px;top:380px"></div>
<div class="ig" style="left:41px;top:400px"></div>
<div class="ig" style="left:41px;top:420px"></div>
<div class="ig" style="left:41px;top:440px"></div>
<div class="ig" style="left:81px;top:440px"></div>
<div class="ig" style="left:41px;top:460px"></div>
<div class="ig" style="left:81px;top:460px"></div>
<div class="ig" style="left:41px;top:480px"></div>
<div class="ig" style="left:81px;top:480px"></div>
<div class="ig" style="left:41px;top:500px"></div>
<div class="ig" style="left:81px;top:500px"></div>
<div class="ig" style="left:41px;top:520px"></div>
<div class="ig" style="left:81px;top:520px"></div>
<div class="ig" style="left:41px;top:540px"></div>
<div class="ig" style="left:81px;top:540px"></div>
<div class="ig" style="left:41px;top:560px"></div>
<div class="ig" style="left:41px;top:620px"></div>
<div class="ig" style="left:41px;top:700px"></div>
<div class="ig" style="left:41px;top:800px"></div>
<div class="caret" style="top:400px;width:721px"></div>
</div>
</body></html>
